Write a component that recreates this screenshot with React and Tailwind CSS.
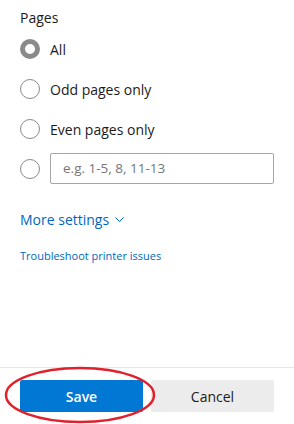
function Radio({ checked }) {
  if (checked) {
    return <span className="w-5 h-5 rounded-full border-[5px] border-[#8a8a8a] bg-white shrink-0" />;
  }
  return <span className="w-5 h-5 rounded-full border border-[#8a8a8a] bg-white shrink-0" />;
}

export default function App() {
  const options = [
    { label: "All", checked: true },
    { label: "Odd pages only" },
    { label: "Even pages only" },
  ];

  return (
    <div className="relative h-screen flex flex-col bg-white text-[#1b1b1b]" style={{ fontFamily: "'Open Sans', 'Noto Sans', sans-serif" }}>
      <div className="flex-1 px-5 pt-[8px]">
        <div className="text-[14px] leading-[20px]">Pages</div>
        <div className="mt-[11px] flex flex-col gap-[20px]">
          {options.map((o) => (
            <div key={o.label} className="flex items-center gap-[10px] h-5">
              <Radio checked={o.checked} />
              <span className="text-[14px]">{o.label}</span>
            </div>
          ))}
        </div>
        <div className="mt-[14px] flex items-center gap-[10px]">
          <Radio />
          <div className="flex-1 h-[31px] border border-[#a6a6a6] rounded-[2px] flex items-center px-3 text-[13.5px] text-[#767676]">
            e.g. 1-5, 8, 11-13
          </div>
        </div>
        <div className="mt-[25px] flex items-center gap-[6px] text-[14px] text-[#0067c0]">
          <span>More settings</span>
          <svg width="9" height="6" viewBox="0 0 9 6" fill="none" stroke="#0067c0" strokeWidth="1">
            <path d="M0.5 0.5 L4.5 4.5 L8.5 0.5" />
          </svg>
        </div>
        <div className="mt-[18px] text-[11px] text-[#0067c0]">Troubleshoot printer issues</div>
      </div>
      <div className="border-t border-[#e5e5e5] px-5 pt-[12px] pb-[12px] flex gap-2">
        <button className="flex-1 h-8 bg-[#0078d4] text-white text-[14px] font-semibold rounded-[2px]">Save</button>
        <button className="flex-1 h-8 bg-[#ececec] text-[#1b1b1b] text-[14px] rounded-[2px]">Cancel</button>
      </div>
      <svg className="absolute left-0 top-0 pointer-events-none" width="294" height="424">
        <ellipse cx="80" cy="395" rx="74" ry="27" fill="none" stroke="#e0202a" strokeWidth="2.5" />
      </svg>
    </div>
  );
}
